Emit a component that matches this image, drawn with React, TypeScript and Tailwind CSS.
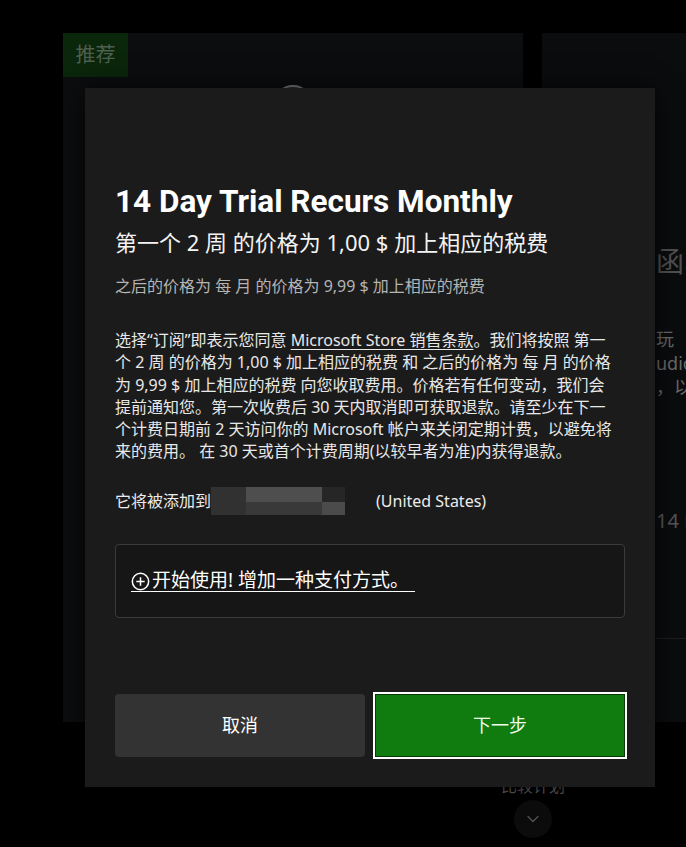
import { ChevronDown } from "lucide-react";

const bodyLines = [
  <>
    选择“订阅”即表示您同意 <span className="underline underline-offset-[3px]">Microsoft Store 销售条款</span>。我们将按照 第一
  </>,
  <>个 2 周 的价格为 1,00 $ 加上相应的税费 和 之后的价格为 每 月 的价格</>,
  <>为 9,99 $ 加上相应的税费 向您收取费用。价格若有任何变动，我们会</>,
  <>提前通知您。第一次收费后 30 天内取消即可获取退款。请至少在下一</>,
  <>个计费日期前 2 天访问你的 Microsoft 帐户来关闭定期计费，以避免将</>,
  <>来的费用。 在 30 天或首个计费周期(以较早者为准)内获得退款。</>,
];

function PlusCircle() {
  return (
    <svg width="19" height="19" viewBox="0 0 20 20" fill="none" stroke="currentColor" strokeWidth="1.6">
      <circle cx="10" cy="10" r="8.6" />
      <path d="M10 5.6v8.8M5.6 10h8.8" />
    </svg>
  );
}

function BlurredAddress() {
  return (
    <div className="flex h-[28px] w-[134px] shrink-0 blur-[0.6px]">
      <div className="w-[35px] bg-[#313131]" />
      <div className="flex w-[76px] flex-col">
        <div className="h-[15px] bg-[#4e4e4e]" />
        <div className="flex-1 bg-[#393939]" />
      </div>
      <div className="flex w-[23px] flex-col">
        <div className="h-[15px] bg-[#262626]" />
        <div className="flex-1 bg-[#4b4b4b]" />
      </div>
    </div>
  );
}

function Background() {
  return (
    <div className="flex flex-col pt-[33px]">
      <div className="flex gap-[19px] pl-[63px]">
        <div className="flex h-[689px] w-[460px] shrink-0 flex-col bg-[#0c0d0f]">
          <div className="flex h-[44px] w-[65px] items-center justify-center bg-[#0a260b] text-[20px] text-[#4f5f4f]">
            推荐
          </div>
          <div className="mt-[8px] h-[40px] w-[40px] self-center rounded-full border-2 border-[#7a7a7a] bg-[#2a2a2a]" />
        </div>
        <div className="flex h-[689px] w-[144px] shrink-0 flex-col overflow-hidden bg-[#0b0c0e] pl-[114px] whitespace-nowrap">
          <div className="mt-[210px] text-[28px] leading-[36px] text-[#505050]">函、</div>
          <div className="mt-[48px] flex flex-col text-[18px] leading-[24px] text-[#6a6a6a]">
            <span>玩</span>
            <span>udio</span>
            <span>，以</span>
          </div>
          <div className="mt-[108px] text-[20px] leading-[28px] text-[#575757]">14 D</div>
          <div className="mt-[103px] h-px w-full bg-[#1e1e20]" />
        </div>
      </div>
      <div className="ml-[473px] mt-[52px] flex w-[120px] flex-col items-center">
        <span className="text-[16px] leading-[24px] text-[#5e5e5e]">比较计划</span>
        <div className="mt-[2px] flex h-[38px] w-[38px] items-center justify-center rounded-full bg-[#0c0c0c] text-[#555555]">
          <ChevronDown size={20} strokeWidth={1.5} />
        </div>
      </div>
    </div>
  );
}

export default function App() {
  return (
    <div className="relative h-[847px] w-[686px] overflow-hidden bg-black font-['Noto_Sans','Noto_Sans_CJK_SC',sans-serif]">
      <Background />

      <div className="absolute left-[85px] top-[88px] flex h-[699px] w-[570px] flex-col bg-[#1b1b1b] px-[30px] pb-[30px] pt-[95px] shadow-[0_0_24px_rgba(0,0,0,0.7)]">
        <h1 className="font-['Roboto',sans-serif] text-[31.5px] font-bold leading-[38px] text-white">
          14 Day Trial Recurs Monthly
        </h1>
        <p className="mt-[6px] text-[22px] leading-[30px] text-[#f3f3f3]">第一个 2 周 的价格为 1,00 $ 加上相应的税费</p>
        <p className="mt-[17px] text-[16px] leading-[24px] text-[#b4b4b4]">之后的价格为 每 月 的价格为 9,99 $ 加上相应的税费</p>

        <div className="mt-[31px] flex flex-col text-[16px] leading-[22.3px] text-[#e8e8e8]">
          {bodyLines.map((line, i) => (
            <span key={i} className="whitespace-nowrap">
              {line}
            </span>
          ))}
        </div>

        <div className="mt-[24px] flex h-[28px] items-center text-[16px] text-[#ececec]">
          <span>它将被添加到</span>
          <BlurredAddress />
          <span className="ml-[31px]">(United States)</span>
        </div>

        <div className="mt-[29px] flex h-[74px] items-center rounded-[4px] border border-[#3b3b3b] bg-[#161616] pl-[15px]">
          <span className="flex items-end gap-[2px] border-b border-white pr-[6px] text-[19px] leading-[21px] text-white">
            <PlusCircle />
            <span>开始使用! 增加一种支付方式。</span>
          </span>
        </div>

        <div className="mt-auto flex gap-[10px]">
          <button className="flex h-[63px] w-[250px] items-center justify-center rounded-[4px] bg-[#333333] text-[18px] text-white">
            取消
          </button>
          <button className="flex h-[63px] w-[250px] items-center justify-center border border-[#0a3a0a] bg-[#107c10] text-[18px] text-[#f0fbec] shadow-[0_0_0_2px_#ffffff]">
            下一步
          </button>
        </div>
      </div>
    </div>
  );
}
